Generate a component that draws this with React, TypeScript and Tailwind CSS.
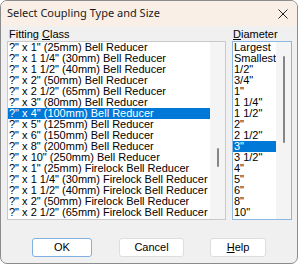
import React from 'react';

const fittings = [
  '?" x 1" (25mm) Bell Reducer',
  '?" x 1 1/4" (30mm) Bell Reducer',
  '?" x 1 1/2" (40mm) Bell Reducer',
  '?" x 2" (50mm) Bell Reducer',
  '?" x 2 1/2" (65mm) Bell Reducer',
  '?" x 3" (80mm) Bell Reducer',
  '?" x 4" (100mm) Bell Reducer',
  '?" x 5" (125mm) Bell Reducer',
  '?" x 6" (150mm) Bell Reducer',
  '?" x 8" (200mm) Bell Reducer',
  '?" x 10" (250mm) Bell Reducer',
  '?" x 1" (25mm) Firelock Bell Reducer',
  '?" x 1 1/4" (30mm) Firelock Bell Reducer',
  '?" x 1 1/2" (40mm) Firelock Bell Reducer',
  '?" x 2" (50mm) Firelock Bell Reducer',
  '?" x 2 1/2" (65mm) Firelock Bell Reducer',
];

const diameters = [
  'Largest', 'Smallest', '1/2"', '3/4"', '1"', '1 1/4"', '1 1/2"', '2"',
  '2 1/2"', '3"', '3 1/2"', '4"', '5"', '6"', '8"', '10"',
];

function Row({ text, selected }: { text: string; selected: boolean }) {
  return (
    <div
      className={
        'h-[11px] leading-[11px] pl-[1px] whitespace-nowrap overflow-hidden ' +
        (selected ? 'bg-[#0078d7] text-white' : 'text-black')
      }
    >
      {text}
    </div>
  );
}

export default function App() {
  return (
    <div
      className="w-[298px] h-[264px] bg-[#f0f0f0] border border-[#8c8c8c] rounded-[7px] overflow-hidden flex flex-col"
      style={{ fontFamily: '"Liberation Sans", Arial, sans-serif' }}
    >
      {/* title bar */}
      <div className="h-[25px] shrink-0 bg-[#f9efe7] flex items-center justify-between pl-[6px] pr-[9px]">
        <span className="text-[11px] text-[#1b1b1b]" style={{ fontFamily: '"Noto Sans", sans-serif' }}>
          Select Coupling Type and Size
        </span>
        <svg width="10" height="10" viewBox="0 0 10 10">
          <path d="M0.5 0.5 L9.5 9.5 M9.5 0.5 L0.5 9.5" stroke="#222" strokeWidth="1" />
        </svg>
      </div>

      {/* body */}
      <div className="flex gap-[6px] pl-[6px] pt-[2px] text-[11px]">
        <div className="w-[219px] flex flex-col">
          <div className="h-[13px] leading-[13px] pl-[2px] text-black">
            Fitting <span className="underline">C</span>lass
          </div>
          <div className="h-[179px] border border-[#c9c9c9] bg-white flex">
            <div className="flex-1">
              {fittings.map((f, i) => (
                <Row key={f} text={f} selected={i === 6} />
              ))}
            </div>
            <div className="w-[15px] bg-[#f4f4f4] flex justify-center pt-[106px]">
              <div className="w-[2px] h-[19px] rounded-full bg-[#858585]" />
            </div>
          </div>
        </div>

        <div className="w-[60px] flex flex-col">
          <div className="h-[13px] leading-[13px] pl-[1px] text-black">
            <span className="underline">D</span>iameter
          </div>
          <div className="h-[179px] border border-[#8cb6e4] bg-white flex">
            <div className="flex-1 overflow-hidden">
              {diameters.map((d, i) => (
                <Row key={d} text={d} selected={i === 9} />
              ))}
            </div>
            <div className="w-[15px] bg-[#f4f4f4] flex justify-center pt-[14px]">
              <div className="w-[2px] h-[87px] rounded-full bg-[#858585]" />
            </div>
          </div>
        </div>
      </div>

      {/* buttons */}
      <div className="flex pl-[31px] pt-[18px] text-[11px] text-black">
        <button className="w-[60px] h-[19px] bg-white border border-[#7fb0e0] rounded-[3px]">OK</button>
        <button className="ml-[27px] w-[65px] h-[19px] bg-white border border-[#dedede] rounded-[3px]">Cancel</button>
        <button className="ml-[26px] w-[56px] h-[19px] bg-white border border-[#dedede] rounded-[3px]">
          <span className="underline">H</span>elp
        </button>
      </div>
    </div>
  );
}
